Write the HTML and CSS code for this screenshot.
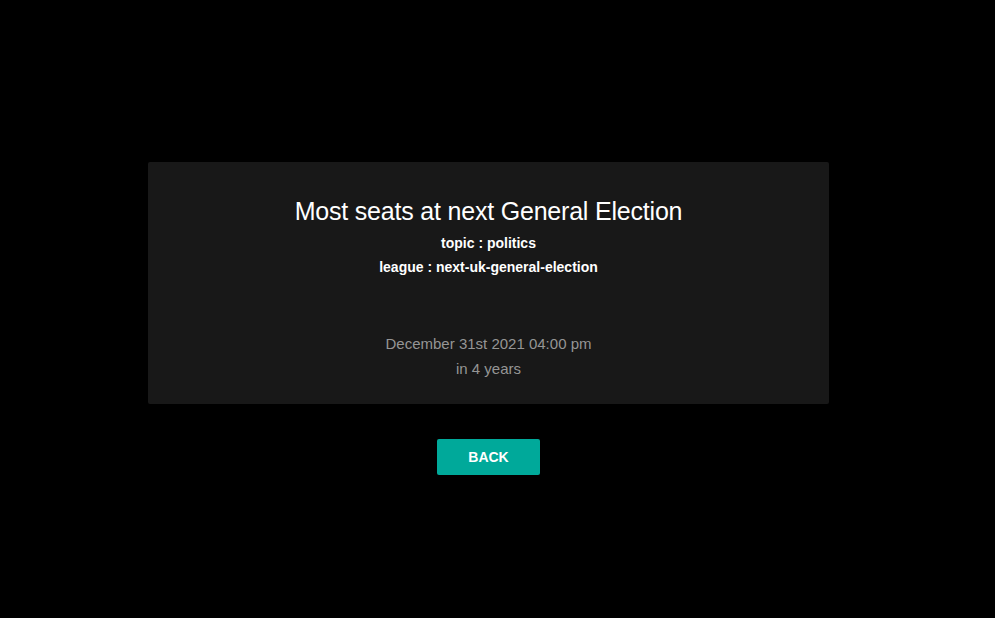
FILE: index.html
```html
<!DOCTYPE html>
<html>
<head>
<meta charset="utf-8">
<link rel="stylesheet" href="styles.css">
</head>
<body>
<main class="page">
  <section class="card">
    <h1 class="title">Most seats at next General Election</h1>
    <div class="meta">topic : politics</div>
    <div class="meta">league : next-uk-general-election</div>
    <div class="when">
      <div class="date">December 31st 2021 04:00 pm</div>
      <div class="date">in 4 years</div>
    </div>
  </section>
  <button class="back">BACK</button>
</main>
</body>
</html>
```
FILE: styles.css
```css
html, body {
  margin: 0;
  padding: 0;
  background: #000;
  height: 100%;
}
body {
  font-family: "Liberation Sans", Arial, Helvetica, sans-serif;
  color: #fff;
}
.page {
  display: flex;
  flex-direction: column;
  align-items: center;
  padding-top: 162px;
  padding-right: 18px;
}
.card {
  width: 681px;
  height: 242px;
  box-sizing: border-box;
  background: #181818;
  border-radius: 2px;
  display: flex;
  flex-direction: column;
  align-items: center;
  padding-top: 35px;
}
.title {
  margin: 0;
  font-size: 25px;
  font-weight: 400;
  line-height: 29px;
  letter-spacing: -0.2px;
}
.meta {
  font-size: 14px;
  font-weight: 700;
  line-height: 24px;
}
.meta:first-of-type {
  margin-top: 5px;
}
.when {
  margin-top: 52px;
  display: flex;
  flex-direction: column;
  align-items: center;
}
.date {
  color: #959595;
  font-size: 15px;
  line-height: 25px;
}
.back {
  margin-top: 35px;
  width: 103px;
  height: 36px;
  border: 0;
  border-radius: 2px;
  background: #00a99a;
  color: #fff;
  font-family: "Liberation Sans", Arial, sans-serif;
  font-weight: 700;
  font-size: 14px;
  padding: 0;
}
```
